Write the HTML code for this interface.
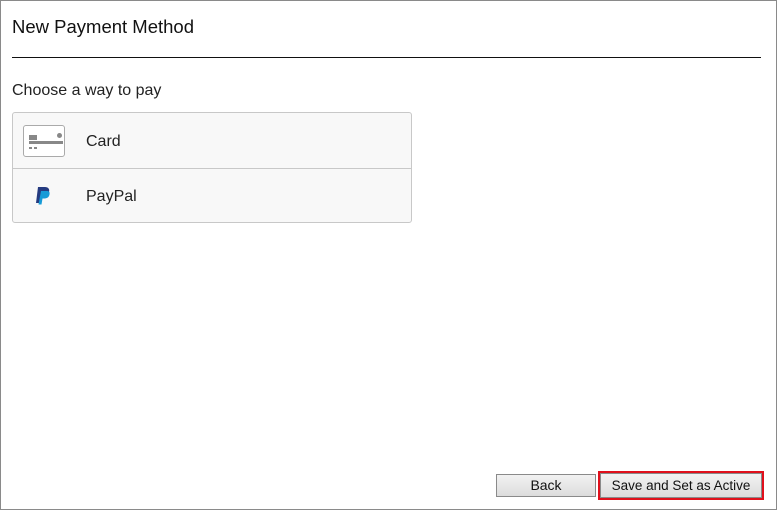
<!DOCTYPE html>
<html><head><style>
html,body{margin:0;padding:0;}
body{width:777px;height:510px;position:relative;background:#fff;font-family:"Liberation Sans",sans-serif;overflow:hidden;}
.frame{position:absolute;left:0;top:0;width:775px;height:508px;border:1px solid #8a8a8a;}
.t{position:absolute;left:12px;top:16px;font-size:18.5px;color:#111;white-space:nowrap;}
.hr{position:absolute;left:12px;top:57px;width:749px;height:1px;background:#111;}
.c{position:absolute;left:12px;top:82px;font-size:16px;color:#222;white-space:nowrap;}
.box{position:absolute;left:12px;top:112px;width:398px;height:109px;border:1px solid #c8c8c8;border-radius:3px;background:#f8f8f8;}
.div{position:absolute;left:0;top:55px;width:398px;height:1px;background:#c8c8c8;}
.lbl{position:absolute;left:73px;font-size:16px;color:#222;}
.btn{position:absolute;font-family:"Liberation Sans",sans-serif;font-size:14px;color:#111;text-align:center;border:1px solid #8a8a8a;background:linear-gradient(#f2f2f2,#dcdcdc);box-sizing:border-box;line-height:21px;}
</style></head><body>
<div class="frame"></div>
<div class="t">New Payment Method</div>
<div class="hr"></div>
<div class="c">Choose a way to pay</div>
<div class="box">
 <div style="position:absolute;left:10px;top:12px;width:40px;height:30px;border:1px solid #aaa;border-radius:3px;background:#fff;"></div>
 <div style="position:absolute;left:16px;top:22px;width:8px;height:5px;background:#888;"></div>
 <div style="position:absolute;left:44px;top:20px;width:5px;height:5px;border-radius:3px;background:#888;"></div>
 <div style="position:absolute;left:16px;top:28px;width:34px;height:3px;background:#888;"></div>
 <div style="position:absolute;left:16px;top:34px;width:3px;height:2px;background:#888;"></div>
 <div style="position:absolute;left:21px;top:34px;width:3px;height:2px;background:#888;"></div>
 <div class="lbl" style="top:20px;">Card</div>
 <div class="div"></div>
 <svg style="position:absolute;left:22px;top:72px" width="16" height="22" viewBox="0 0 16 20">
  <path d="M3 1h7c3 0 5 2 4 5-1 3-3 4-6 4H6l-1 7H1z" fill="#253b80"/>
  <path d="M6 5h6c2 0 3 1 2.5 3.5-.6 3-2.6 4-5.5 4H7.5l-1 6H3.5z" fill="#179bd7"/>
 </svg>
 <div class="lbl" style="top:75px;">PayPal</div>
</div>
<div class="btn" style="left:496px;top:474px;width:100px;height:23px;">Back</div>
<div style="position:absolute;left:598px;top:471px;width:166px;height:29px;border:2px solid #e0101c;box-sizing:border-box;"></div>
<div class="btn" style="left:600px;top:473px;width:162px;height:25px;line-height:23px;font-size:13.5px;">Save and Set as Active</div>
</body></html>
